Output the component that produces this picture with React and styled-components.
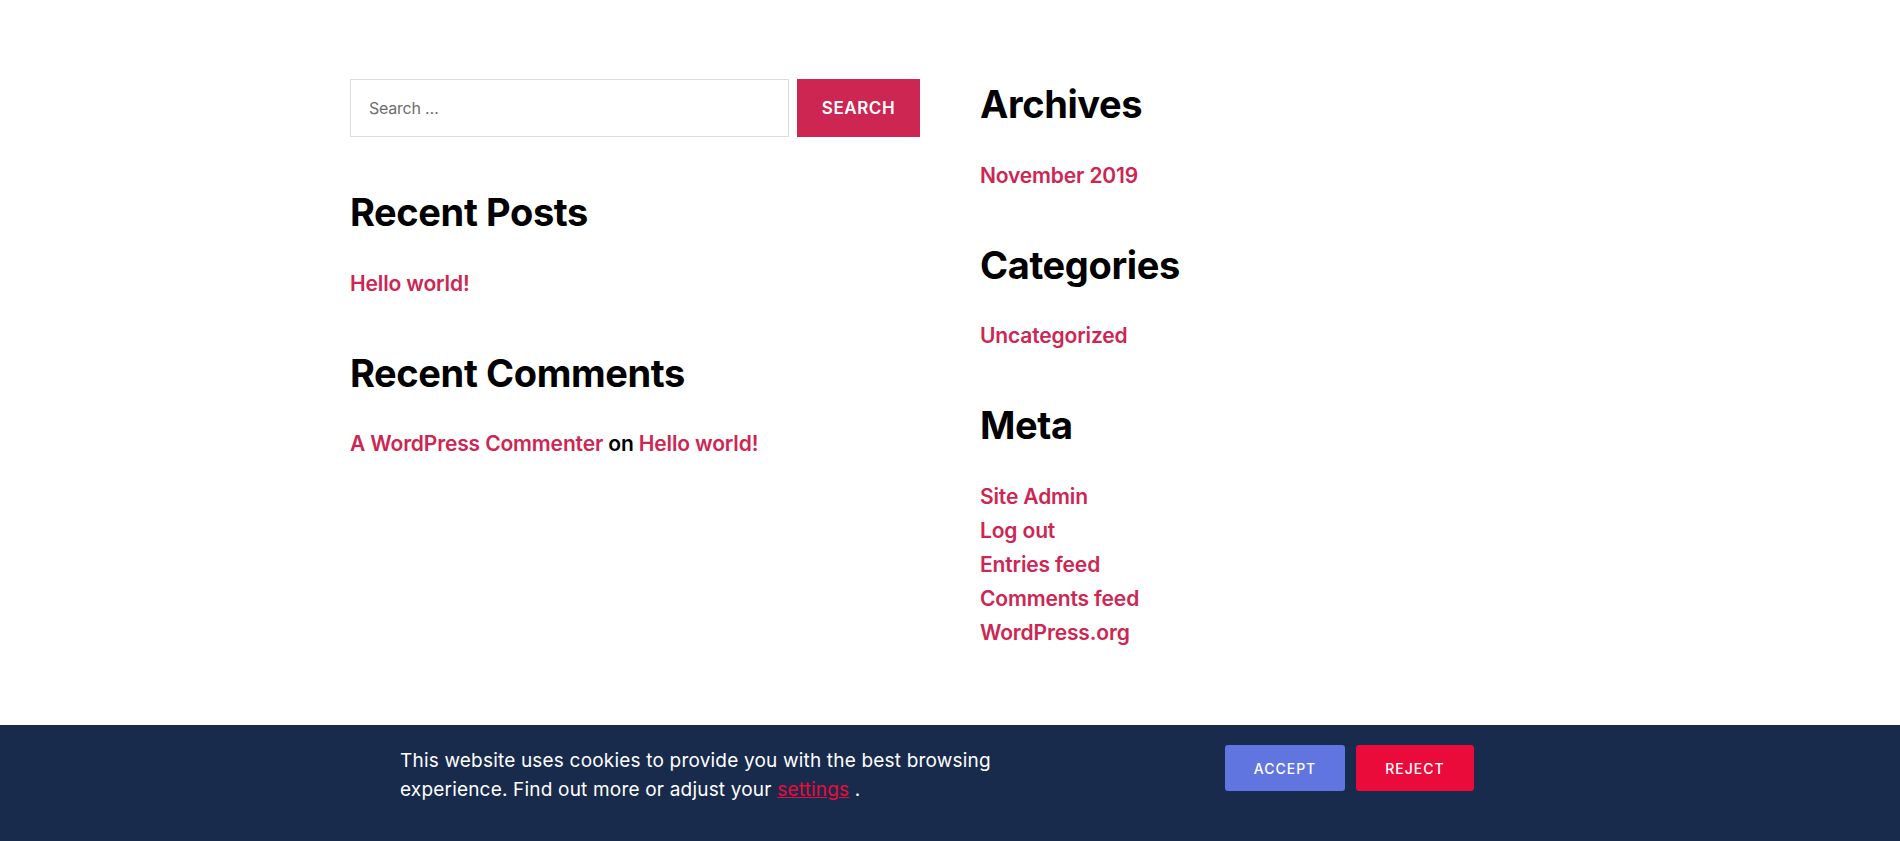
import React from "react";
import styled, { createGlobalStyle } from "styled-components";

const Global = createGlobalStyle`
  html, body { margin: 0; padding: 0; background: #fff; }
  body { font-family: Inter, "Noto Sans", sans-serif; color: #000; -webkit-font-smoothing: antialiased; }
  * { box-sizing: border-box; }
`;

const Page = styled.div`
  min-height: 841px;
  background: #fff;
`;

const Widgets = styled.div`
  width: 1200px;
  margin: 0 auto;
  padding-top: 79px;
  display: grid;
  grid-template-columns: 570px 570px;
  column-gap: 60px;
  align-items: start;
`;

const Column = styled.div`
  display: flex;
  flex-direction: column;
  gap: 49px;
  padding-top: ${(p) => (p.$offset ? p.$offset : 0)}px;
`;

const Widget = styled.section``;

const Title = styled.h2`
  margin: 0 0 30px;
  font-family: Inter, sans-serif;
  font-size: 38px;
  line-height: 1.25;
  font-weight: 700;
  letter-spacing: -0.01em;
  color: #000;
`;

const List = styled.ul`
  margin: 0;
  padding: 0;
  list-style: none;
`;

const Item = styled.li`
  font-size: 21px;
  line-height: 34px;
  font-weight: 600;
  letter-spacing: -0.007em;
  color: #000;
`;

const Link = styled.a`
  color: #cd2653;
  text-decoration: none;
  font-weight: 600;
`;

const SearchForm = styled.form`
  display: flex;
  gap: 8px;
  height: 58px;
  margin-bottom: 3px;
`;

const SearchInput = styled.input`
  flex: 1;
  height: 58px;
  border: 1px solid #dcdcdc;
  border-radius: 0;
  padding: 0 18px;
  font-family: Inter, sans-serif;
  font-size: 16px;
  color: #000;
  letter-spacing: -0.015em;
  outline: none;
  &::placeholder { color: #6d6d6d; opacity: 1; }
`;

const SearchButton = styled.button`
  width: 123px;
  height: 58px;
  border: none;
  background: #cd2653;
  color: #fff;
  font-family: Inter, sans-serif;
  font-size: 17px;
  font-weight: 600;
  letter-spacing: 0.0333em;
  text-transform: uppercase;
  cursor: pointer;
  padding: 0;
`;

const Banner = styled.div`
  position: fixed;
  left: 0;
  right: 0;
  bottom: 0;
  height: 116px;
  background: #182b4c;
  padding-top: 20px;
`;

const BannerInner = styled.div`
  width: 1100px;
  margin: 0 auto;
  display: flex;
  justify-content: space-between;
  align-items: flex-start;
  padding-right: 26px;
`;

const BannerText = styled.p`
  margin: 1px 0 0;
  width: 640px;
  font-family: Inter, sans-serif;
  font-size: 19px;
  line-height: 29px;
  color: #fff;
  letter-spacing: 0.01em;
`;

const SettingsLink = styled.a`
  color: #ea0b3a;
  text-decoration: underline;
`;

const Buttons = styled.div`
  display: flex;
  gap: 11px;
`;

const CookieButton = styled.button`
  width: ${(p) => p.$w}px;
  height: 46px;
  border: none;
  border-radius: 3px;
  background: ${(p) => p.$bg};
  color: #fff;
  font-family: Inter, sans-serif;
  font-size: 14px;
  font-weight: 500;
  letter-spacing: 1px;
  text-transform: uppercase;
  padding: 0;
  cursor: pointer;
`;

export default function App() {
  return (
    <Page>
      <Global />
      <Widgets>
        <Column>
          <Widget>
            <SearchForm onSubmit={(e) => e.preventDefault()}>
              <SearchInput type="search" placeholder="Search …" />
              <SearchButton type="submit">Search</SearchButton>
            </SearchForm>
          </Widget>
          <Widget>
            <Title>Recent Posts</Title>
            <List>
              <Item><Link href="#">Hello world!</Link></Item>
            </List>
          </Widget>
          <Widget>
            <Title>Recent Comments</Title>
            <List>
              <Item>
                <Link href="#">A WordPress Commenter</Link> on <Link href="#">Hello world!</Link>
              </Item>
            </List>
          </Widget>
        </Column>
        <Column $offset={2}>
          <Widget>
            <Title>Archives</Title>
            <List>
              <Item><Link href="#">November 2019</Link></Item>
            </List>
          </Widget>
          <Widget>
            <Title>Categories</Title>
            <List>
              <Item><Link href="#">Uncategorized</Link></Item>
            </List>
          </Widget>
          <Widget>
            <Title>Meta</Title>
            <List>
              <Item><Link href="#">Site Admin</Link></Item>
              <Item><Link href="#">Log out</Link></Item>
              <Item><Link href="#">Entries feed</Link></Item>
              <Item><Link href="#">Comments feed</Link></Item>
              <Item><Link href="#">WordPress.org</Link></Item>
            </List>
          </Widget>
        </Column>
      </Widgets>
      <Banner>
        <BannerInner>
          <BannerText>
            This website uses cookies to provide you with the best browsing experience. Find out more or adjust your{" "}
            <SettingsLink href="#">settings</SettingsLink> .
          </BannerText>
          <Buttons>
            <CookieButton $w={120} $bg="#6175e0">Accept</CookieButton>
            <CookieButton $w={118} $bg="#ea0b3a">Reject</CookieButton>
          </Buttons>
        </BannerInner>
      </Banner>
    </Page>
  );
}
